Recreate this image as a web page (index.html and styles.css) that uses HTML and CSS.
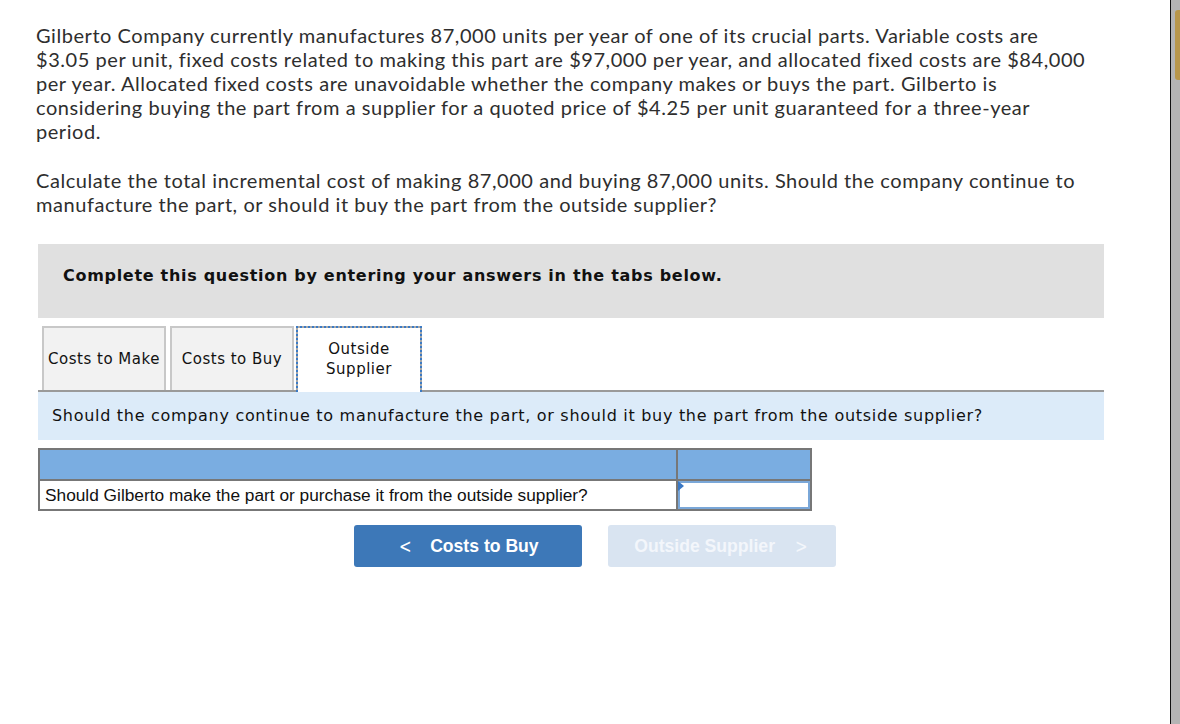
FILE: index.html
```html
<!DOCTYPE html>
<html lang="en">
<head>
<meta charset="utf-8">
<title>Gilberto Company</title>
<link rel="stylesheet" href="styles.css">
</head>
<body>
<div class="page">
  <main class="content">
    <p class="intro">Gilberto Company currently manufactures 87,000 units per year of one of its crucial parts. Variable costs are $3.05 per unit, fixed costs related to making this part are $97,000 per year, and allocated fixed costs are $84,000 per year. Allocated fixed costs are unavoidable whether the company makes or buys the part. Gilberto is considering buying the part from a supplier for a quoted price of $4.25 per unit guaranteed for a three-year period.</p>
    <p class="intro second">Calculate the total incremental cost of making 87,000 and buying 87,000 units. Should the company continue to manufacture the part, or should it buy the part from the outside supplier?</p>

    <section class="question">
      <div class="instruction">Complete this question by entering your answers in the tabs below.</div>
      <div class="tabs">
        <div class="tab">Costs to Make</div>
        <div class="tab">Costs to Buy</div>
        <div class="tab active">Outside<br>Supplier</div>
      </div>
      <div class="prompt">Should the company continue to manufacture the part, or should it buy the part from the outside supplier?</div>
      <div class="answer-table">
        <div class="head-cell"></div>
        <div class="head-cell last"></div>
        <div class="row-label">Should Gilberto make the part or purchase it from the outside supplier?</div>
        <div class="row-input"><span class="input-box"></span></div>
      </div>
      <div class="nav">
        <button class="nav-btn prev"><span class="chev">&lt;</span>Costs to Buy</button>
        <button class="nav-btn next">Outside Supplier<span class="chev right">&gt;</span></button>
      </div>
    </section>
  </main>
  <div class="scrollbar"><div class="thumb"></div></div>
</div>
</body>
</html>
```

FILE: styles.css
```css
html, body {
  margin: 0;
  padding: 0;
  background: #fff;
}

.page {
  display: flex;
  width: 1180px;
  height: 724px;
  overflow: hidden;
}

.content {
  flex: 1;
  border-right: 1px solid #111;
  padding: 23px 0 0 36px;
  box-sizing: border-box;
}

.intro {
  margin: 0;
  width: 1057px;
  font-family: Lato, "Open Sans", sans-serif;
  font-size: 20px;
  letter-spacing: 0.55px;
  line-height: 24px;
  color: #2e2e2e;
}

.intro.second {
  margin-top: 25px;
}

.question {
  margin-top: 28px;
  margin-left: 2px;
  width: 1066px;
}

.instruction {
  background: #e0e0e0;
  height: 74px;
  box-sizing: border-box;
  padding: 21px 0 0 25px;
  font-family: "DejaVu Sans", Verdana, sans-serif;
  font-weight: bold;
  font-size: 16px;
  letter-spacing: 0.7px;
  line-height: 22px;
  color: #111;
}

.tabs {
  margin-top: 8px;
  display: flex;
  align-items: flex-end;
  padding-left: 4px;
  border-bottom: 2px solid #9a9a9a;
  height: 64px;
}

.tab {
  box-sizing: border-box;
  width: 124px;
  height: 64px;
  margin-right: 4px;
  border: 2px solid #c8c8c8;
  border-bottom: none;
  background: #f2f2f2;
  display: flex;
  align-items: center;
  justify-content: center;
  text-align: center;
  font-family: "DejaVu Sans", Verdana, sans-serif;
  font-size: 15px;
  letter-spacing: 0.5px;
  line-height: 20px;
  color: #111;
  white-space: nowrap;
}

.tab.active {
  position: relative;
  margin-left: -2px;
  width: 126px;
  height: 66px;
  margin-bottom: -2px;
  padding-bottom: 2px;
  background: #fff;
  border: 2px solid #a8a8a8;
  border-bottom: none;
}

.tab.active::after {
  content: "";
  position: absolute;
  left: -2px;
  right: -2px;
  top: -2px;
  bottom: 0;
  border: 2px dotted #3b7ac4;
  border-bottom: none;
}

.prompt {
  background: #dcebf9;
  height: 48px;
  box-sizing: border-box;
  padding: 14px 0 0 14px;
  font-family: "DejaVu Sans", Verdana, sans-serif;
  font-size: 16px;
  letter-spacing: 0.7px;
  line-height: 20px;
  color: #111;
}

.answer-table {
  margin-top: 8px;
  width: 774px;
  box-sizing: border-box;
  border: 2px solid #777;
  display: grid;
  grid-template-columns: 638px 132px;
  background: #777;
  gap: 2px 0;
}

.head-cell {
  background: #7aade1;
  height: 29px;
  border-right: 2px solid #777;
}

.head-cell.last {
  border-right: none;
}

.row-label {
  background: #fff;
  height: 28px;
  border-right: 2px solid #777;
  padding-left: 5px;
  font-family: "Liberation Sans", Arial, sans-serif;
  font-size: 17.3px;
  line-height: 28px;
  color: #111;
}

.row-input {
  background: #fff;
  height: 28px;
  position: relative;
}

.input-box {
  position: absolute;
  inset: 0;
  border: 2px solid #7aa7d8;
  box-sizing: border-box;
}

.input-box::before {
  content: "";
  position: absolute;
  left: -2px;
  top: -2px;
  border-top: 5px solid transparent;
  border-bottom: 5px solid transparent;
  border-left: 6px solid #3a78c4;
}

.nav {
  margin-top: 14px;
  display: flex;
  gap: 26px;
  padding-left: 316px;
}

.nav-btn {
  width: 228px;
  height: 42px;
  border: none;
  border-radius: 3px;
  font-family: "Liberation Sans", Arial, sans-serif;
  font-weight: bold;
  font-size: 17.6px;
  color: #fff;
  display: flex;
  align-items: center;
  justify-content: center;
  padding: 0;
}

.nav-btn.prev {
  background: #3d78b8;
}

.nav-btn.next {
  background: #d9e4f1;
  color: #f3f6fb;
}

.chev {
  font-family: "DejaVu Sans", sans-serif;
  font-weight: normal;
  font-size: 20px;
  margin-right: 16px;
  display: inline-block;
  transform: scaleX(0.75);
}

.chev.right {
  margin-right: 0;
  margin-left: 18px;
}

.scrollbar {
  width: 9px;
  background: #b4b4b4;
  position: relative;
}

.thumb {
  position: absolute;
  right: 0;
  top: 10px;
  width: 5px;
  height: 70px;
  background: #b8974b;
  border-radius: 3px 0 0 3px;
}
```
